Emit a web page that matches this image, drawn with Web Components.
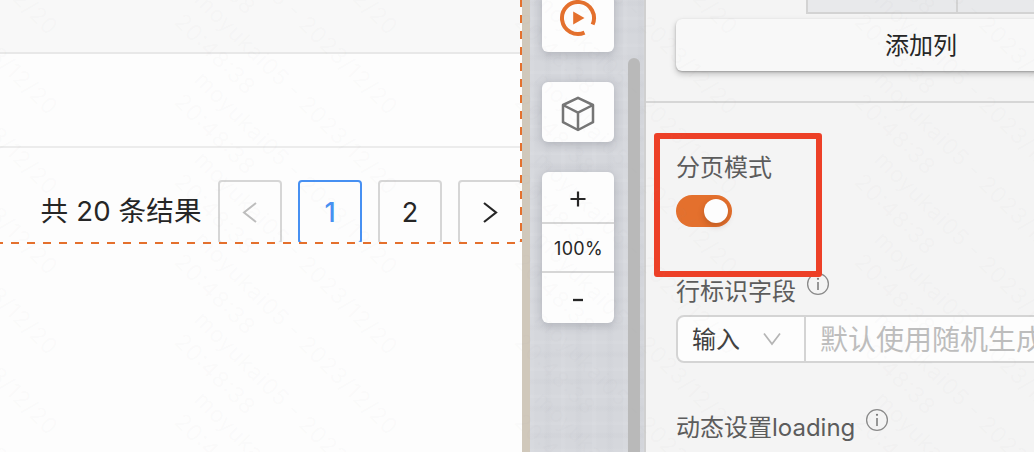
<!DOCTYPE html>
<html lang="zh-CN">
<head>
<meta charset="utf-8">
<title>页面编辑器</title>
<style>
html,body{margin:0;height:100%;overflow:hidden}
body{font-family:Inter,"Noto Sans CJK SC",sans-serif;color:#262626}
</style>
</head>
<body>
<editor-app></editor-app>
<script>
const define = (name, html, setup) => customElements.define(name, class extends HTMLElement {
  constructor() {
    super();
    const t = document.createElement('template');
    t.innerHTML = html;
    this.attachShadow({mode: 'open'}).append(t.content.cloneNode(true));
    if (setup) setup(this.shadowRoot);
  }
});

define('page-button', `
<style>
:host{display:flex;box-sizing:border-box;width:64px;height:64px;border:2px solid #d6d6d6;border-radius:4px;align-items:center;justify-content:center;font-size:27px;line-height:1;flex:none}
:host([active]){border-color:#4790f2;color:#4790f2;font-weight:500}
:host([disabled]){color:#bdbdbd}
</style><slot></slot>`);

define('data-canvas', `
<style>
:host{display:block;width:522px;height:452px;background:#fdfdfd;overflow:hidden}
.frame{position:relative;height:244px;box-sizing:border-box;overflow:hidden}
.head{height:52px;background:#f8f8f8;border-bottom:2px solid #e8e8e8}
.row{height:92px;border-bottom:2px solid #ececec}
.pager{display:flex;gap:16px;padding:32px 0 0 40.5px;height:62px;overflow:hidden}
.total{font-size:27.6px;line-height:62px;width:161.5px;white-space:nowrap;letter-spacing:.15px}
.h,.v{position:absolute}
.h{left:0;right:0;bottom:0;height:2px;background:repeating-linear-gradient(90deg,#e4702d 0 8px,#fdfdfd 8px 16px) -4.5px 0/200% 100%}
.v{right:0;top:0;bottom:2px;width:2px;background:repeating-linear-gradient(180deg,#e4702d 0 8px,#fdfdfd 8px 16px) 0 -1px/100% 200%}
svg{width:20px;height:24px;fill:none;stroke:currentColor;stroke-width:2}
</style>
<div class="frame"><div class="head"></div><div class="row"></div>
<div class="pager"><div class="total">共 20 条结果</div>
<page-button disabled><svg viewBox="0 0 20 24"><path d="M16 3 4 12.5 16 22"/></svg></page-button>
<page-button active>1</page-button><page-button>2</page-button>
<page-button><svg viewBox="0 0 20 24" style="stroke-width:2.2"><path d="M4 3 16 12.5 4 22"/></svg></page-button></div>
<div class="h"></div><div class="v"></div></div>`);

define('tool-card', `
<style>:host{display:flex;flex-direction:column;align-items:center;justify-content:center;width:72px;background:#fdfdfd;border-radius:6px;box-shadow:0 2px 10px rgba(60,65,80,.26);flex:none}</style><slot></slot>`);

define('tool-strip', `
<style>
:host{display:flex;box-sizing:border-box;width:122px;flex:none;height:452px;border-left:8px solid #d0c8bb;overflow:hidden;
background:repeating-linear-gradient(90deg,rgba(255,255,255,.06) 0 3px,transparent 5px 14px,rgba(90,95,110,.02) 16px 19px,transparent 22px 31px),repeating-linear-gradient(0deg,rgba(255,255,255,.06) 0 2px,transparent 4px 13px,rgba(90,95,110,.02) 15px 18px,transparent 20px 27px),#d5d7dc}
.tools{display:flex;flex-direction:column;gap:30px;margin:-8px 14px 0 12px;width:72px}
.play,.cube{height:60px}.zoom{height:151px}
.cell{height:50px;width:72px;display:flex;align-items:center;justify-content:center;box-sizing:border-box}
.cell.plus{padding-top:4px}.cell.minus{padding-top:3px}
.pct{height:51px;border:solid #d6d6d6;border-width:2px 0;font-size:18px;letter-spacing:.3px;padding:1px 0 0 1px}
.bar{width:12px;height:400px;margin-top:58px;background:#b9b9b9;border-radius:6px 6px 0 0}
svg{display:block}
</style>
<div class="tools">
<tool-card class="play"><svg width="40" height="40" viewBox="0 0 40 40" style="margin-top:-8px"><path d="M34.6 26.5A16 16 0 1 0 26.5 34.6" fill="none" stroke="#e4702d" stroke-width="4"/><path d="M15.2 13.6v12.8L26.5 20Z" fill="#e4702d"/></svg></tool-card>
<tool-card class="cube"><svg width="36" height="40" viewBox="0 0 36 40" fill="none" stroke="#757575" stroke-width="2.5" stroke-linejoin="round"><path d="M18 5.8 33 13v17.2L18 38 3 30.2V13ZM3 13l15 7.6L33 13M18 20.6V38"/></svg></tool-card>
<tool-card class="zoom"><div class="cell plus"><svg width="16" height="16"><path d="M8 .5v15M.5 8h15" stroke="#262626" stroke-width="2.2"/></svg></div><div class="cell pct">100%</div><div class="cell minus"><svg width="10" height="4"><path d="M0 2h10" stroke="#262626" stroke-width="2.3"/></svg></div></tool-card>
</div><div class="bar"></div>`);

define('info-icon', `<style>:host{display:block;width:24px;height:24px;flex:none}svg{display:block}</style>
<svg width="24" height="24" viewBox="0 0 24 24"><circle cx="12" cy="12" r="10.4" fill="none" stroke="#8a8a8a" stroke-width="1.3"/><path d="M12 10v8" stroke="#777" stroke-width="1.5"/><circle cx="12" cy="6.8" r="1.1" fill="#777"/></svg>`);

define('toggle-switch', `<style>
:host{display:flex;justify-content:flex-end;box-sizing:border-box;width:56px;height:32px;border-radius:16px;background:#e4702d;padding:4px}
i{width:24px;height:24px;border-radius:50%;background:#fdfdfd;box-shadow:0 3px 6px rgba(80,30,0,.25)}</style><i></i>`);

define('field-label', `<style>:host{display:flex;gap:10px;font-size:24px;line-height:36px;height:36px;color:#5c5c5c;white-space:nowrap}</style><slot></slot>`);

define('property-panel', `
<style>
:host{display:block;box-sizing:border-box;width:390px;height:452px;border-left:2px solid #d0d0d0;background:#f4f4f4;overflow:hidden;position:relative}
.tabs{display:grid;grid-template-columns:150px 1fr;height:14px;box-sizing:border-box;margin-left:160px;background:#e8e9eb;border:solid #d3d3d3;border-width:0 0 2px 2px}
.tabs i{box-sizing:border-box;border-right:2px solid #d3d3d3;width:150px}
.add{height:52px;width:490px;box-sizing:border-box;margin:5px 0 0 30px;background:#f8f8f8;border-radius:6px;box-shadow:0 3px 6px rgba(0,0,0,.22),0 1px 2px rgba(0,0,0,.22);font-size:24px;line-height:54px;text-align:center}
.section{margin-top:30px;border-top:2px solid #d6d6d6;padding:47px 0 0 30px}
toggle-switch{margin-top:9px}
.id{margin-top:47px}
.input{display:flex;box-sizing:border-box;width:500px;height:48px;margin-top:5px;border:2px solid #d4d4d4;border-radius:8px;background:#fdfdfd}
.select{box-sizing:border-box;width:128px;border-right:2px solid #d4d4d4;display:flex;justify-content:space-between;align-items:center;padding:0 23px 0 14px;font-size:24px;color:#404040}
.select span{line-height:44px;padding-top:2px}
.hint{padding-left:14px;font-size:28px;line-height:46px;color:#bdbdbd;white-space:nowrap}
.load{margin-top:47px}
info-icon{margin:-2px 0 0 -.5px}
.mark{position:absolute;left:8px;top:133px;width:168px;height:144px;box-sizing:border-box;border:6px solid #ed4027;border-radius:3px}
</style>
<div class="tabs"><i></i></div><div class="add">添加列</div>
<div class="section"><field-label>分页模式</field-label><toggle-switch></toggle-switch>
<field-label class="id">行标识字段<info-icon></info-icon></field-label>
<div class="input"><div class="select"><span>输入</span><svg width="18" height="14" fill="none" stroke="#b5b5b5" stroke-width="1.7"><path d="M1 1.5 9 12 17 1.5"/></svg></div><div class="hint">默认使用随机生成</div></div>
<field-label class="load">动态设置loading<info-icon></info-icon></field-label></div>
<div class="mark"></div>`);

define('water-mark', `<style>:host{position:absolute;inset:0;pointer-events:none;overflow:hidden}svg{display:block}</style>
<svg width="1034" height="452" aria-hidden="true" font-size="22.5" fill="#a0a0a0" fill-opacity=".045"></svg>`, root => {
  const svg = root.querySelector('svg');
  const add = (text, x, y, len) => {
    const span = len * Math.SQRT1_2;
    if (x + span < 10 || y + span < 10 || x > 1024 || y > 442) return;
    const t = document.createElementNS('http://www.w3.org/2000/svg', 'text');
    t.setAttribute('transform', `translate(${x} ${y}) rotate(45)`);
    t.setAttribute('textLength', len);
    t.textContent = text;
    svg.append(t);
  };
  for (let x = -340; x < 1034; x += 340)
    for (let y = -240; y < 480; y += 80) {
      add('moyukai05 - 2023/12/20', x + 193, y + 81, 276);
      add('20:48:38', x + 173, y + 103 - 80, 103);
    }
});

define('editor-app', `<style>:host{display:flex;position:relative;width:1034px;height:452px;overflow:hidden}data-canvas,property-panel{flex:none}</style>
<data-canvas></data-canvas><tool-strip></tool-strip><property-panel></property-panel><water-mark></water-mark>`);
</script>
</body>
</html>
